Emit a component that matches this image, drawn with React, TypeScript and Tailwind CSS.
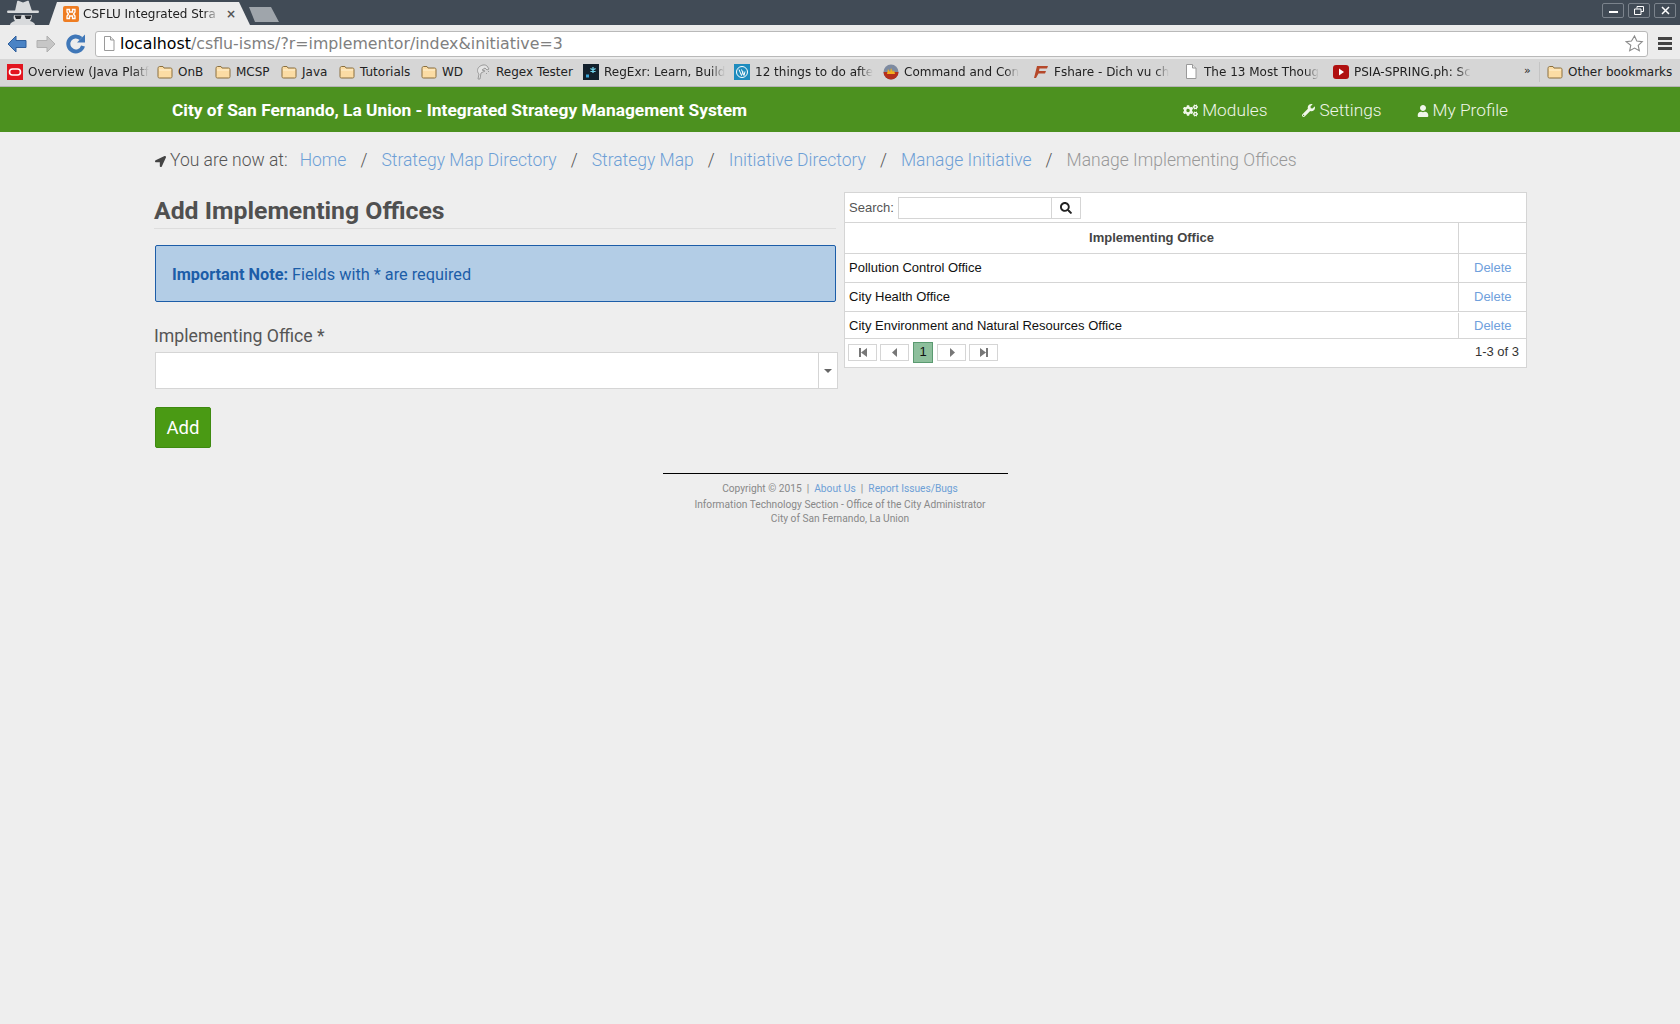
import {
  FaCogs,
  FaLocationArrow,
  FaSearch,
  FaUser,
  FaWrench,
} from "react-icons/fa";

const Folder = () => (
  <svg width="16" height="14" viewBox="0 0 16 14" className="shrink-0">
    <path
      d="M1 3.500c0-1 .5-2 1.500-2h3.500l1 1.500h6.500c1 0 1.500.6 1.500 1.500v7c0 1-.5 1.500-1.500 1.500h-11C1.500 13 1 12.500 1 11.500z"
      fill="#fbdca4"
      stroke="#8a6f3f"
    />
    <path d="M2 5h12" stroke="#fff1d2" />
  </svg>
);

const PageIcon = ({ className = "" }: { className?: string }) => (
  <svg width="12" height="15" viewBox="0 0 12 15" className={className}>
    <path d="M1.500.5h6l3.500 3.500v10.500h-9.500z" fill="#fff" stroke="#9a9a9a" />
    <path d="M7.500.5v3.500h3.500" fill="#e8e8e8" stroke="#9a9a9a" />
  </svg>
);

const OracleIcon = () => (
  <svg width="16" height="16" viewBox="0 0 16 16" className="shrink-0">
    <rect width="16" height="16" fill="#e2151f" />
    <rect x="2.500" y="5" width="11" height="6" rx="3" fill="none" stroke="#fff" strokeWidth="1.600" />
  </svg>
);

const RegexIcon = () => (
  <svg width="16" height="16" viewBox="0 0 16 16" className="shrink-0">
    <path d="M3 15l1-5c-2-2-2-5 0-7s6-3 8-1l2 3-2 1-2-2-3 2 3 1-4 2-1 6z" fill="#e4e4e4" stroke="#9a9a9a" />
    <path d="M11 9l1 1M13 7l1 1" stroke="#9a9a9a" />
  </svg>
);

const RegExrIcon = () => (
  <svg width="16" height="16" viewBox="0 0 16 16" className="shrink-0">
    <rect width="16" height="16" fill="#12202c" />
    <path d="M10 3v6M7.400 4.500l5.200 3M12.600 4.500l-5.200 3" stroke="#6fd0e8" strokeWidth="1.300" />
    <rect x="3" y="10.500" width="3" height="3" fill="#3aa5d8" />
  </svg>
);

const WordpressIcon = () => (
  <svg width="16" height="16" viewBox="0 0 16 16" className="shrink-0">
    <rect width="16" height="16" fill="#1e8cbe" />
    <circle cx="8" cy="8" r="5.500" fill="none" stroke="#fff" />
    <path d="M5 5.500l2.500 6 1.500-4M7.500 5.500l2.500 6 1-4" fill="none" stroke="#fff" />
  </svg>
);

const CncIcon = () => (
  <svg width="16" height="16" viewBox="0 0 16 16" className="shrink-0">
    <circle cx="8" cy="8" r="7.500" fill="#7d8aa0" />
    <path d="M.500 8a7.500 7.500 0 0 0 15 0z" fill="#b5301c" />
    <path d="M4 10l1-5 2 3 1-4 2 4 1-2 1 4z" fill="#f2b01e" />
  </svg>
);

const FshareIcon = () => (
  <svg width="16" height="14" viewBox="0 0 16 14" className="shrink-0">
    <path d="M4 1h11l-1 2.500H6.500L6 6h7l-1 2.500H5.500L3 13H1z" fill="#b5482a" />
  </svg>
);

const YoutubeIcon = () => (
  <svg width="16" height="14" viewBox="0 0 16 14" className="shrink-0">
    <rect width="16" height="14" rx="3" fill="#b01010" />
    <path d="M6 3.500l5 3.500-5 3.500z" fill="#fff" />
  </svg>
);

const bookmarks = [
  { icon: <OracleIcon />, label: "Overview (Java Platf", width: "w-[150px]", fade: true },
  { icon: <Folder />, label: "OnB", width: "w-[58px]", fade: false },
  { icon: <Folder />, label: "MCSP", width: "w-[66px]", fade: false },
  { icon: <Folder />, label: "Java", width: "w-[58px]", fade: false },
  { icon: <Folder />, label: "Tutorials", width: "w-[82px]", fade: false },
  { icon: <Folder />, label: "WD", width: "w-[54px]", fade: false },
  { icon: <RegexIcon />, label: "Regex Tester", width: "w-[108px]", fade: false },
  { icon: <RegExrIcon />, label: "RegExr: Learn, Build", width: "w-[151px]", fade: true },
  { icon: <WordpressIcon />, label: "12 things to do afte", width: "w-[149px]", fade: true },
  { icon: <CncIcon />, label: "Command and Con", width: "w-[150px]", fade: true },
  { icon: <FshareIcon />, label: "Fshare - Dich vu ch", width: "w-[150px]", fade: true },
  {
    icon: (
      <span className="w-[16px] shrink-0 flex justify-center">
        <PageIcon />
      </span>
    ),
    label: "The 13 Most Thoug",
    width: "w-[150px]",
    fade: true,
  },
  { icon: <YoutubeIcon />, label: "PSIA-SPRING.ph: Sc", width: "w-[150px]", fade: true },
];

const crumbs = [
  "Home",
  "Strategy Map Directory",
  "Strategy Map",
  "Initiative Directory",
  "Manage Initiative",
];

const offices = [
  "Pollution Control Office",
  "City Health Office",
  "City Environment and Natural Resources Office",
];

function BrowserChrome() {
  return (
    <div className="font-['DejaVu_Sans',sans-serif]">
      {/* title bar */}
      <div className="h-[25px] bg-[#414b56] flex items-end relative">
        <svg width="36" height="25" viewBox="0 0 36 25" className="ml-[5px] shrink-0">
          <path d="M10 11l2-9c0-1 1-1.500 2-1l4 1.500 4-1.500c1-.5 2-.5 2 1l3 9z" fill="#d8dadc" />
          <rect x="2" y="10.500" width="32" height="2.500" rx="1.200" fill="#d8dadc" />
          <path d="M9 15h18c0 3-1 5-2 6 3 1 5 2 5 4H5c0-2 2-3 5-4-1-1-2-3-1-6z" fill="#d8dadc" />
          <path d="M9.500 15.500h7l-1 3.500h-4.500zM19.500 15.500h7l-1.500 3.500H21z" fill="#25292e" />
        </svg>
        <div className="ml-[8px] w-[201px] h-[23px] bg-[#ececec] rounded-t-[5px] [clip-path:polygon(8px_0,190px_0,201px_100%,0_100%)] flex items-center pl-[14px] shrink-0">
          <svg width="16" height="16" viewBox="0 0 16 16" className="shrink-0">
            <rect width="16" height="16" rx="2" fill="#ef7d22" />
            <path
              d="M4 3.500h2.500v2.500h3V3.500H12V6l-1.500 2 1.500 2v2.500H9.500V10h-3v2.500H4V10l1.500-2L4 6z"
              fill="none"
              stroke="#fff"
              strokeWidth="1.300"
            />
          </svg>
          <span className="ml-[4px] w-[137px] text-[12px] text-[#222] whitespace-nowrap [mask-image:linear-gradient(to_right,black_88%,transparent)]">
            CSFLU Integrated Stra
          </span>
          <span className="ml-[6px] text-[12px] text-[#555] font-bold">×</span>
        </div>
        <div className="ml-[-1px] w-[30px] h-[15px] mb-[3px] bg-[#9fa5ab] [clip-path:polygon(0_0,22px_0,30px_100%,6px_100%)]" />
        <div className="absolute right-[4px] top-[3px] flex gap-[4px]">
          <div className="w-[22px] h-[15px] border border-[#7b838c] rounded-[2px] flex items-center justify-center">
            <div className="w-[9px] h-[2px] mt-[3px] bg-white" />
          </div>
          <div className="w-[22px] h-[15px] border border-[#7b838c] rounded-[2px] flex items-center justify-center">
            <svg width="10" height="9" viewBox="0 0 10 9">
              <path d="M3 2.500V.500h6.500v5H7M.500 3h6.500v5.500H.500z" fill="none" stroke="#fff" />
            </svg>
          </div>
          <div className="w-[22px] h-[15px] border border-[#7b838c] rounded-[2px] flex items-center justify-center">
            <svg width="9" height="9" viewBox="0 0 9 9">
              <path d="M1 1l7 7M8 1L1 8" stroke="#fff" strokeWidth="1.500" />
            </svg>
          </div>
        </div>
      </div>

      {/* toolbar */}
      <div className="h-[34px] pt-[3px] bg-[#ececec] flex items-center">
        <svg width="20" height="20" viewBox="0 0 20 20" className="ml-[7px] shrink-0">
          <path d="M1 10l8-8v4.500h10v7H9V18z" fill="#4a83c5" stroke="#2f5f9c" />
        </svg>
        <svg width="20" height="20" viewBox="0 0 20 20" className="ml-[9px] shrink-0">
          <path d="M19 10l-8-8v4.500H1v7h10V18z" fill="#c6c6c6" stroke="#b0b0b0" />
        </svg>
        <svg width="22" height="22" viewBox="0 0 22 22" className="ml-[9px] shrink-0">
          <path d="M18 13a7.500 7.500 0 1 1-2-7.500" fill="none" stroke="#3f77b8" strokeWidth="4" />
          <path d="M20 1.500v8h-8z" fill="#3f77b8" />
        </svg>
        <div className="ml-[8px] w-[1553px] h-[26px] bg-white border border-[#b9b9b9] rounded-[3px] flex items-center pl-[7px] shrink-0">
          <PageIcon />
          <span className="ml-[5px] text-[15.800px] text-[#808080] whitespace-nowrap">
            <span className="text-black">localhost</span>
            /csflu-isms/?r=implementor/index&amp;initiative=3
          </span>
          <svg width="19" height="19" viewBox="0 0 24 24" className="ml-auto mr-[3px]">
            <path
              d="M12 2.500l2.900 6.300 6.900.8-5.100 4.700 1.400 6.800-6.100-3.400-6.100 3.400 1.400-6.800L1.300 9.600l6.900-.8z"
              fill="#fff"
              stroke="#8a8a8a"
              strokeWidth="1.400"
            />
          </svg>
        </div>
        <div className="ml-[10px] w-[14px] flex flex-col gap-[2px]">
          <div className="h-[3px] bg-[#444]" />
          <div className="h-[3px] bg-[#444]" />
          <div className="h-[3px] bg-[#444]" />
        </div>
      </div>

      {/* bookmarks */}
      <div className="h-[28px] pb-[2px] bg-[#d6d6d6] border-b border-[#b4b4b4] flex items-center pl-[7px] text-[12px] text-[#222] relative">
        {bookmarks.map((b) => (
          <div key={b.label} className={`${b.width} shrink-0 flex items-center gap-[5px]`}>
            {b.icon}
            <span
              className={
                b.fade
                  ? "whitespace-nowrap [mask-image:linear-gradient(to_right,black_88%,transparent)]"
                  : "whitespace-nowrap"
              }
            >
              {b.label}
            </span>
          </div>
        ))}
        <span className="absolute left-[1524px] text-[11px]">»</span>
        <div className="absolute left-[1539px] h-[20px] border-l border-[#c4c4c4]" />
        <div className="absolute left-[1547px] flex items-center gap-[5px]">
          <Folder />
          <span className="whitespace-nowrap">Other bookmarks</span>
        </div>
      </div>
    </div>
  );
}

function NavBar() {
  return (
    <div className="h-[45px] bg-[#4c911f] flex items-center pl-[172px] text-white font-['Roboto',sans-serif]">
      <span className="pt-[2px] text-[17.350px] font-bold">
        City of San Fernando, La Union - Integrated Strategy Management System
      </span>
      <div className="ml-auto mr-[172px] pt-[2px] flex items-center gap-[35px] text-[17.300px] font-light text-[#f0f6ea]">
        <span className="flex items-center gap-[4px]">
          <FaCogs className="text-[15px]" /> Modules
        </span>
        <span className="flex items-center gap-[4px]">
          <FaWrench className="text-[13px]" /> Settings
        </span>
        <span className="flex items-center gap-[4px]">
          <FaUser className="text-[12px]" /> My Profile
        </span>
      </div>
    </div>
  );
}

function Breadcrumb() {
  return (
    <div className="h-[56px] flex items-center text-[17.500px] font-light text-[#555] whitespace-nowrap">
      <FaLocationArrow className="ml-[1px] text-[11px] text-[#444] mr-[4px] mt-[2px]" />
      <span>You are now at:</span>
      {crumbs.map((c, i) => (
        <span key={c} className="flex items-center">
          {i > 0 && <span className="mx-[14px] text-[#555]">/</span>}
          <a className={`text-[#6d9fd6] ${i === 0 ? "ml-[12px]" : ""}`}>{c}</a>
        </span>
      ))}
      <span className="mx-[14px] text-[#555]">/</span>
      <span className="text-[#999]">Manage Implementing Offices</span>
    </div>
  );
}

function AddForm() {
  return (
    <div className="w-[682px] shrink-0">
      <h2 className="pt-[8px] h-[41px] border-b border-[#ddd] text-[24.800px] leading-[30px] font-bold text-[#505050]">
        Add Implementing Offices
      </h2>
      <div className="mt-[16px] ml-px h-[57px] pt-[3px] bg-[#b3cde6] border border-[#1c5da8] rounded-[2px] flex items-center pl-[16px] text-[16.300px] text-[#1c5da8]">
        <strong className="font-bold mr-[4px]">Important Note:</strong> Fields with * are required
      </div>
      <div className="mt-[23px] text-[17.700px] leading-[22px] text-[#555]">Implementing Office *</div>
      <div className="mt-[5px] ml-px w-[683px] h-[37px] bg-white border border-[#d5d5d5] flex">
        <div className="flex-1" />
        <div className="w-[19px] border-l border-[#d5d5d5] flex items-center justify-center">
          <div className="border-x-[4px] border-x-transparent border-t-[4px] border-t-[#666]" />
        </div>
      </div>
      <button className="mt-[18px] ml-px block w-[56px] h-[41px] pt-[2px] bg-[#4a9a14] border border-[#3e8a10] rounded-[2px] text-white text-[18.500px] font-normal">
        Add
      </button>
    </div>
  );
}

const PagerButton = ({ path }: { path: string }) => (
  <div className="w-[29px] h-[17px] border border-[#d5d5d5] flex items-center justify-center">
    <svg width="10" height="9" viewBox="0 0 10 9">
      <path d={path} fill="#777" />
    </svg>
  </div>
);

function OfficeTable() {
  return (
    <div className="w-[683px] ml-[8px] mt-[4px] h-[176px] bg-white border border-[#d5d5d5] font-['Liberation_Sans',sans-serif] text-[13px] text-[#111] flex flex-col">
      <div className="h-[30px] border-b border-[#d5d5d5] flex items-center pl-[4px]">
        <span className="text-[#555] w-[49px]">Search:</span>
        <div className="w-[153px] h-[22px] border border-[#d5d5d5] border-r-0" />
        <div className="w-[30px] h-[22px] border border-[#d5d5d5] flex items-center justify-center">
          <FaSearch className="text-[12px] text-[#222]" />
        </div>
      </div>
      <div className="h-[31px] border-b border-[#d5d5d5] flex">
        <div className="flex-1 flex items-center justify-center font-bold text-[#444]">Implementing Office</div>
        <div className="w-[68px] border-l border-[#d5d5d5]" />
      </div>
      {offices.map((o, i) => (
        <div
          key={o}
          className={`${i === 2 ? "h-[27px] pt-[1px]" : "h-[29px]"} border-b border-[#d5d5d5] flex`}
        >
          <div className="flex-1 flex items-center pl-[4px]">{o}</div>
          <div className="w-[68px] border-l border-[#d5d5d5] flex items-center pl-[15px] text-[#6fa0dc]">Delete</div>
        </div>
      ))}
      <div className="flex-1 pb-[2px] flex items-center pl-[3px] pr-[7px]">
        <PagerButton path="M1 0h2v9H1zM9 0v9L3 4.500z" />
        <div className="ml-[3px]">
          <PagerButton path="M7 0v9L2 4.500z" />
        </div>
        <div className="ml-[4px] w-[20px] h-[21px] bg-[#8dbf9c] border border-[#5a9a70] flex items-center justify-center">
          1
        </div>
        <div className="ml-[4px]">
          <PagerButton path="M3 0v9l5-4.500z" />
        </div>
        <div className="ml-[3px]">
          <PagerButton path="M1 0v9l6-4.500zM7 0h2v9H7z" />
        </div>
        <span className="ml-auto text-[#333]">1-3 of 3</span>
      </div>
    </div>
  );
}

function Footer() {
  return (
    <div className="mt-[25px] flex flex-col items-center font-['Roboto',sans-serif] text-[10.200px] text-[#888]">
      <div className="mr-[9px] w-[345px] border-t border-black" />
      <div className="mt-[7px] leading-[16px]">
        Copyright © 2015 &nbsp;|&nbsp; <a className="text-[#6d9fd6]">About Us</a> &nbsp;|&nbsp;{" "}
        <a className="text-[#6d9fd6]">Report Issues/Bugs</a>
      </div>
      <div className="leading-[15px]">Information Technology Section - Office of the City Administrator</div>
      <div className="leading-[13px]">City of San Fernando, La Union</div>
    </div>
  );
}

export default function App() {
  return (
    <div className="min-h-screen bg-[#eeeeee] font-['Roboto',sans-serif]">
      <BrowserChrome />
      <NavBar />
      <div className="pl-[154px] w-[1527px]">
        <Breadcrumb />
        <div className="flex items-start">
          <AddForm />
          <OfficeTable />
        </div>
      </div>
      <Footer />
    </div>
  );
}
